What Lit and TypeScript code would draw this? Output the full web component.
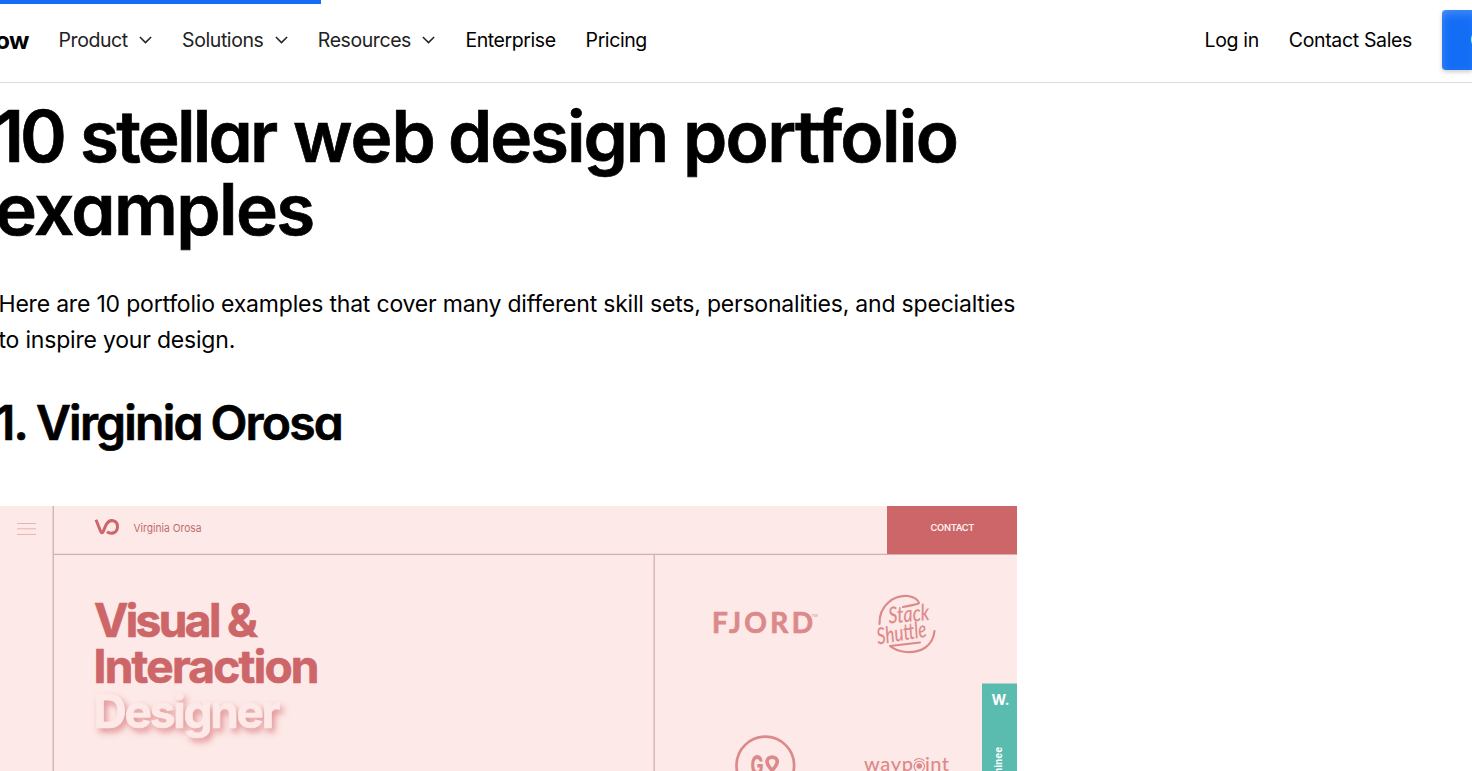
import { LitElement, html, css } from "lit";
import { customElement } from "lit/decorators.js";

@customElement("portfolio-shot")
class PortfolioShot extends LitElement {
  static styles = css`
    :host { display: block; width: 1017px; height: 265px; overflow: hidden; }
    svg { display: block; font-family: Inter, "Liberation Sans", sans-serif; }
    .rule { stroke: #d0b0b0; stroke-width: 1.3; }
    .menu { stroke: #e8b3b3; stroke-width: 1; }
    .red { fill: #cd6668; }
    .soft { fill: #dc898b; }
    .line { fill: none; stroke: #dc898b; stroke-linecap: round; stroke-linejoin: round; }
    .logo { fill: none; stroke: #cd6668; stroke-width: 3; }
    .name { font-size: 11px; fill: #bd6e70; }
    .title { font-size: 46px; font-weight: 700; }
    .bold { stroke: #cd6668; stroke-width: 0.7; }
    .ghost { fill: #fde9e7; stroke: #fde9e7; stroke-width: 0.7; filter: drop-shadow(3px 4px 3px #d8787cc0); }
    .contact { font-size: 9.3px; font-weight: 600; fill: #fff0ee; }
    .fjord { font-family: Lato, sans-serif; font-weight: 700; font-size: 28px; stroke: #dc898b; stroke-width: 0.7; }
    .tm { font-size: 4px; }
    .script { font-family: Lato, sans-serif; font-style: italic; font-weight: 500; font-size: 23px; }
    .way { font-family: Lato, sans-serif; font-size: 20px; font-weight: 500; }
    .go { font-weight: 800; font-size: 27px; }
    .white { fill: #fff; font-weight: 700; }
  `;
  render() {
    return html`<svg width="1017" height="265" viewBox="0 0 1017 265">
      <rect width="1017" height="265" fill="#fde9e7" />
      <path class="menu" d="M17 17.5H36M17 22.8H36M17 28.4H36" />
      <path class="rule" d="M53.2 0V265M53 48.3H1017M654.2 48.5V265" />
      <path class="logo" d="M96 13.7L100.6 25.2Q102 28.5 103.4 25.2L106 19C110 11.5 117.5 14.8 117.5 20.7C117.5 27 111 28.8 107 25.8" />
      <text class="name" x="133.5" y="25.7" textLength="68" lengthAdjust="spacingAndGlyphs">Virginia Orosa</text>
      <text class="red title bold" x="94" y="130.5" textLength="164">Visual &amp;</text>
      <text class="red title bold" x="93.5" y="176.5" textLength="226">Interaction</text>
      <text class="ghost title" x="93.5" y="222" textLength="187">Designer</text>
      <rect class="red" x="887" width="130" height="48" />
      <text class="contact" x="930.5" y="25.2" textLength="44">CONTACT</text>
      <text class="soft fjord" x="712" y="127" textLength="101">FJORD</text>
      <text class="soft tm" x="811.5" y="110.5">TM</text>
      <path class="line" stroke-width="2.2" d="M879.5 118C879 99 894 89 908 90C914 91 918 94 919 97C917 99 913 98.5 903 101M934.5 125C933 140 921 147 906 146Q896 145 890 140L920 136.5" />
      <text class="soft script" transform="translate(889 117.5) rotate(-5)" textLength="41" lengthAdjust="spacingAndGlyphs">Stack</text>
      <text class="soft script" transform="translate(878 138.5) rotate(-9)" textLength="50" lengthAdjust="spacingAndGlyphs">Shuttle</text>
      <circle class="line" cx="765.3" cy="259.5" r="28.8" stroke-width="2.7" />
      <text class="soft go" x="750.5" y="269" textLength="13" lengthAdjust="spacingAndGlyphs">G</text>
      <path class="line" stroke-width="3.6" d="M776 270L769 260.5Q765.3 255 768.5 252.3Q772 249.8 775.8 252.3Q779 255 775.3 260.5L768 270" />
      <text class="soft way" x="864" y="265" textLength="49">wayp</text>
      <text class="soft way" x="925" y="265" textLength="24">int</text>
      <circle class="soft" cx="919.3" cy="260" r="2.8" />
      <path class="line" stroke-width="1.1" d="M916 264.5A5.2 5.2 0 1 1 922.6 264.5M914.5 254.5Q919 250.5 924 254.5" />
      <rect x="982" y="177.5" width="35" height="88" fill="#59bcae" />
      <text class="white" x="991.5" y="199" font-size="14" textLength="18" lengthAdjust="spacingAndGlyphs">W.</text>
      <text class="white" transform="translate(1002.3 284) rotate(-90)" font-size="9.3" textLength="43">Nominee</text>
    </svg>`;
  }
}

@customElement("app-root")
class AppRoot extends LitElement {
  static styles = css`
    :host { display: block; width: 1472px; height: 771px; overflow: hidden; background: #fff; color: #000; font-family: Inter, "Liberation Sans", sans-serif; }
    .progress { height: 4px; width: 321px; background: #146ef5; }
    header { height: 78px; border-bottom: 1px solid #dcdcdc; display: flex; align-items: center; overflow: hidden; box-sizing: content-box; }
    .brand { width: 28.5px; display: flex; justify-content: flex-end; font-weight: 700; font-size: 24px; letter-spacing: -0.8px; margin-right: 30px; padding-bottom: 4px; line-height: 30px; }
    nav { display: flex; gap: 30px; font-size: 19.5px; line-height: 24px; padding-bottom: 6px; letter-spacing: -0.42px; white-space: nowrap; }
    .item { display: flex; align-items: center; gap: 11.4px; color: #222; }
    .item svg { display: block; }
    .strong { color: #000; }
    .right { margin-left: auto; margin-right: 30px; letter-spacing: -0.35px; }
    .cta { width: 30px; height: 60px; flex: none; margin-bottom: 6px; background: #146ef5; border-radius: 4px 0 0 4px; box-shadow: 0 2px 4px #0003, inset 0 8px 10px -4px #ffffff30, inset 5px 0 8px -4px #ffffff20; display: flex; align-items: center; justify-content: flex-end; overflow: hidden; color: #fff; }
    .cta span { width: 2px; font-size: 20px; }
    main { overflow: hidden; }
    h1, h2 { display: grid; font-weight: 600; font-feature-settings: "cv11"; white-space: nowrap; margin: 0; -webkit-text-stroke: 0.7px #000; }
    h1 { grid-template-columns: 86px 213px 155px 235px auto; font-size: 71px; line-height: 73px; letter-spacing: -2.1px; margin: 17px 0 0 -6px; }
    .ten { letter-spacing: -4px; }
    .tight { letter-spacing: -2.8px; }
    .wide { letter-spacing: -1px; }
    .mid { letter-spacing: -1.7px; }
    .last { letter-spacing: -1.6px; padding-left: 1px; }
    p { font-size: 23px; line-height: 36px; margin: 40px 0 0 -1.5px; white-space: nowrap; letter-spacing: -0.2px; }
    h2 { grid-template-columns: 41px 174.5px auto; font-size: 48px; line-height: 56px; margin: 37px 0 55px -5px; letter-spacing: -1.8px; }
  `;
  item(label: string) {
    return html`<span class="item">${label}<svg width="13" height="10" viewBox="0 0 13 10" fill="none" stroke="#222" stroke-width="1.5"><path d="M0.9 2L6.5 7.6L12.1 2" /></svg></span>`;
  }
  render() {
    return html`
      <div class="progress"></div>
      <header>
        <div class="brand">flow</div>
        <nav>
          ${["Product", "Solutions", "Resources"].map((l) => this.item(l))}
          <span class="strong">Enterprise</span><span class="strong">Pricing</span>
        </nav>
        <nav class="right"><span>Log in</span><span>Contact Sales</span></nav>
        <div class="cta"><span>G</span></div>
      </header>
      <main>
        <h1>
          <span class="ten">10</span><span class="tight">stellar</span><span class="wide">web</span><span>design</span><span class="mid">portfolio</span>
          <span class="last">examples</span>
        </h1>
        <p>Here are 10 portfolio examples that cover many different skill sets, personalities, and specialties<br />to inspire your design.</p>
        <h2><span>1.</span><span>Virginia</span><span>Orosa</span></h2>
        <portfolio-shot></portfolio-shot>
      </main>`;
  }
}
